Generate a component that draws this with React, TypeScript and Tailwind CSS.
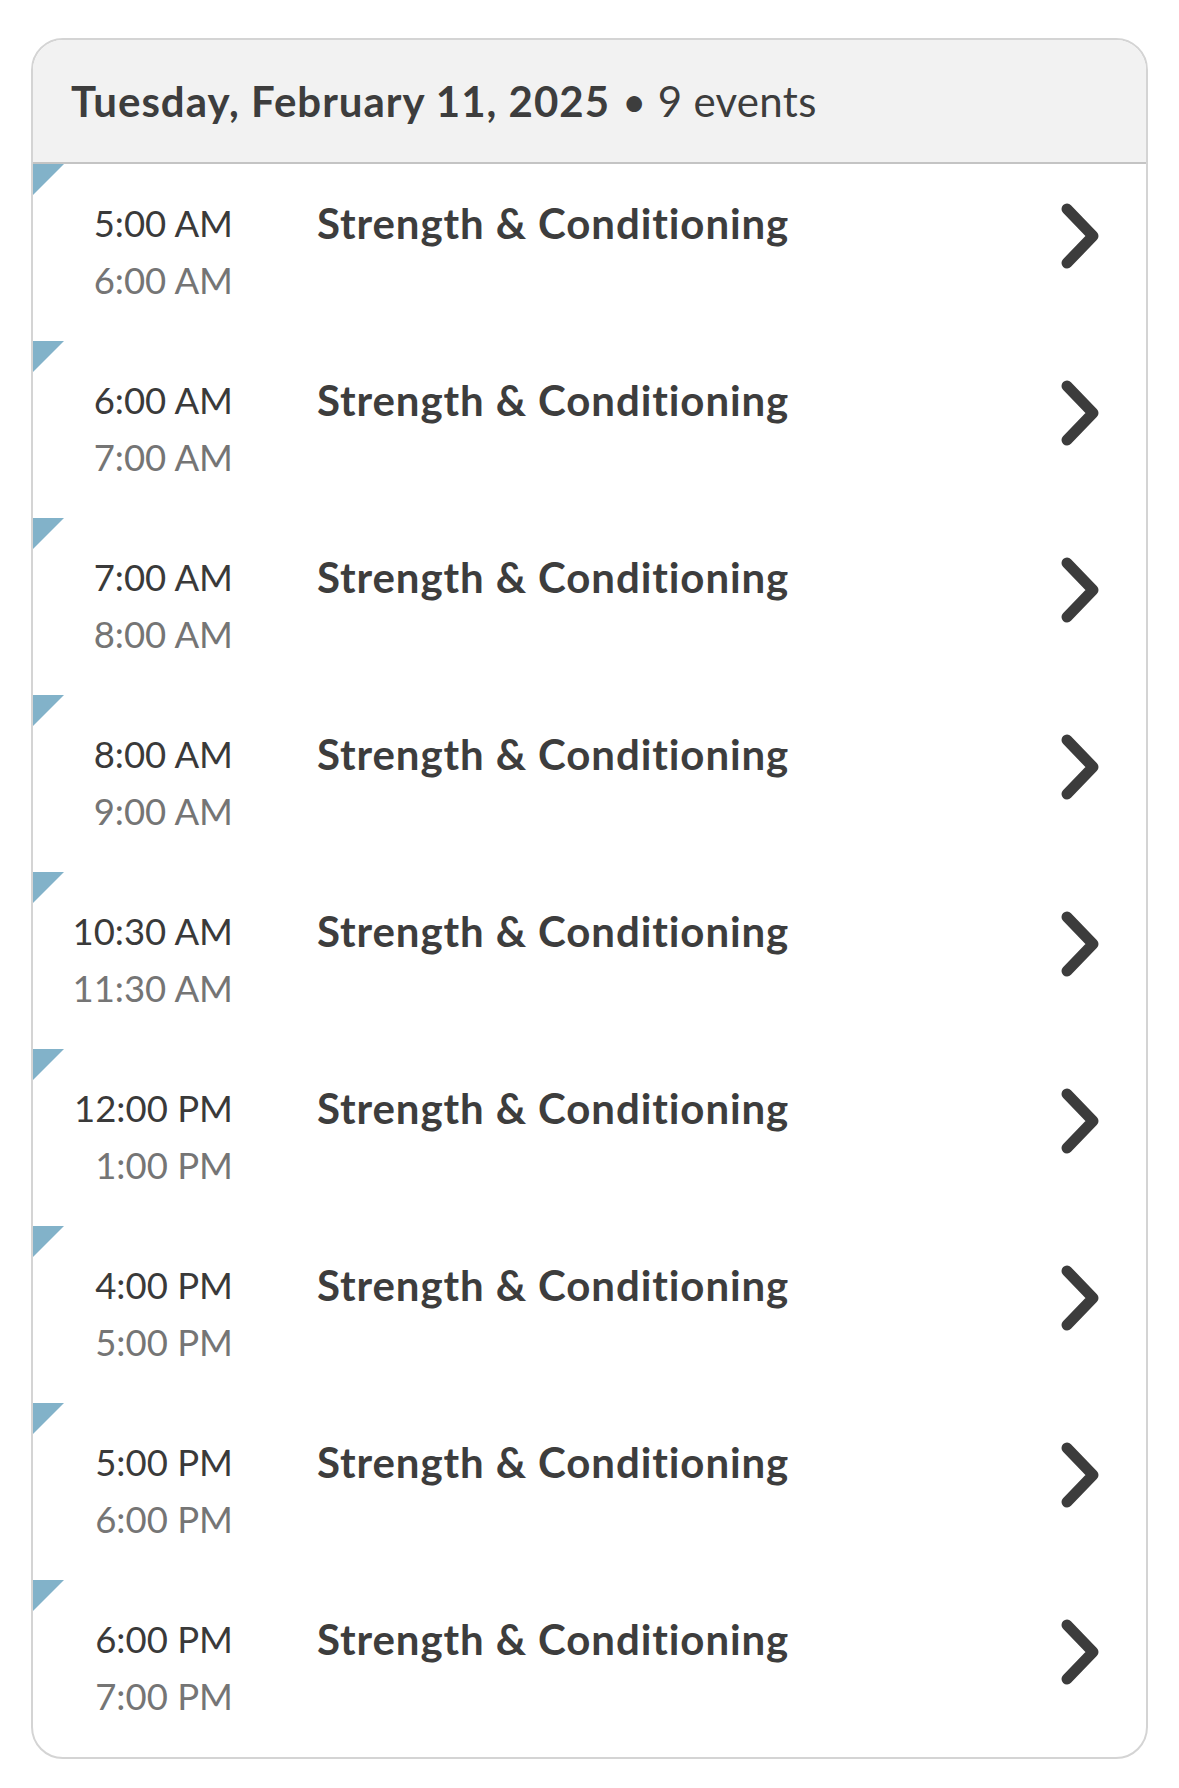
const events = [
  { start: "5:00 AM", end: "6:00 AM" },
  { start: "6:00 AM", end: "7:00 AM" },
  { start: "7:00 AM", end: "8:00 AM" },
  { start: "8:00 AM", end: "9:00 AM" },
  { start: "10:30 AM", end: "11:30 AM" },
  { start: "12:00 PM", end: "1:00 PM" },
  { start: "4:00 PM", end: "5:00 PM" },
  { start: "5:00 PM", end: "6:00 PM" },
  { start: "6:00 PM", end: "7:00 PM" },
];

const Chevron = () => (
  <svg width="40" height="66" viewBox="0 0 40 66" fill="none">
    <path
      d="M7 6 L33 33 L7 60"
      stroke="#3c3c3c"
      strokeWidth="11"
      strokeLinecap="round"
      strokeLinejoin="round"
    />
  </svg>
);

const EventRow = ({ start, end }: { start: string; end: string }) => (
  <div className="relative flex h-[177px] items-start">
    <svg className="absolute left-0 top-0" width="31" height="31" viewBox="0 0 31 31">
      <polygon points="0,0 31,0 0,31" fill="#82b2c9" />
    </svg>
    <div className="flex w-[200px] flex-col items-end pt-[31px] text-[36.5px] leading-[57px]">
      <span className="text-[#3a3a3a]">{start}</span>
      <span className="text-[#757575]">{end}</span>
    </div>
    <div className="ml-[84px] flex-1 pt-[31px] text-[42px] font-bold leading-[57px] tracking-[0.9px] text-[#3d3d3d]">
      Strength &amp; Conditioning
    </div>
    <div className="mr-[46px] mt-[39px]">
      <Chevron />
    </div>
  </div>
);

export default function App() {
  return (
    <div className="min-h-screen bg-white px-[31px] pt-[38px] font-['Lato',sans-serif]">
      <div className="overflow-hidden rounded-[32px] border-2 border-[#d4d4d4] bg-white">
        <div className="flex h-[124px] items-center border-b-2 border-[#c4c4c4] bg-[#f2f2f2] px-[38px] text-[42px] text-[#3d3d3d]">
          <span className="font-bold tracking-[1px]">Tuesday, February 11, 2025</span>
          <span className="ml-[12px] tracking-[0.3px]">• 9 events</span>
        </div>
        <div className="flex flex-col">
          {events.map((e) => (
            <EventRow key={e.start} start={e.start} end={e.end} />
          ))}
        </div>
      </div>
    </div>
  );
}
